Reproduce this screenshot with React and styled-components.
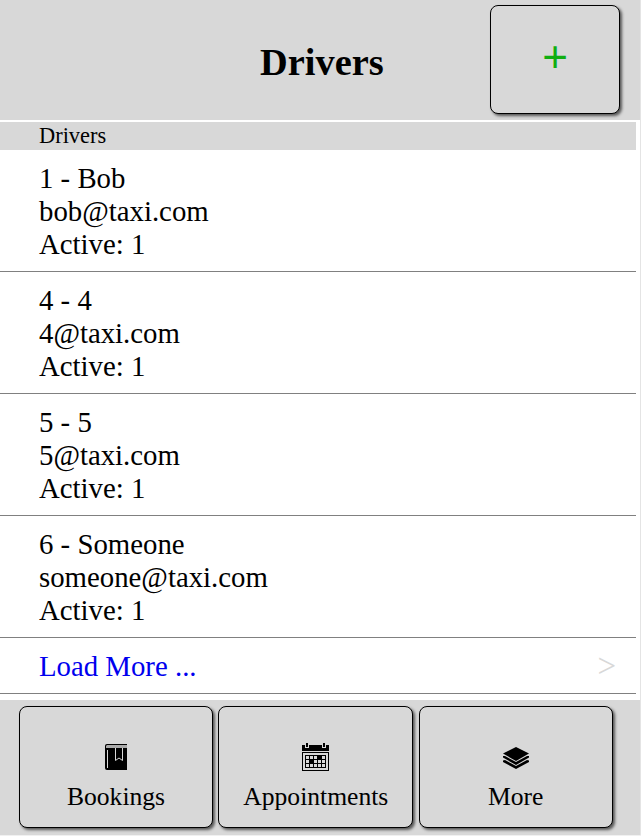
import React from "react";
import styled, { createGlobalStyle } from "styled-components";

const GlobalStyle = createGlobalStyle`
  * { box-sizing: border-box; }
  body {
    margin: 0;
    background: #f0f0f0;
    color: #000;
    font-family: "Liberation Serif", "Times New Roman", serif;
    overflow: hidden;
  }
`;

const Page = styled.div`
  display: flex;
  flex-direction: column;
  width: 641px;
  height: 835px;
  background: #fff;
  border-right: 1px solid #e4e4e4;
`;

const Header = styled.header`
  display: grid;
  grid-template-columns: 490px 130px;
  height: 120px;
  padding-top: 5px;
  background: #d8d8d8;
`;

const Title = styled.h1`
  margin: 0;
  padding: 36px 0 0 260px;
  font-size: 38.4px;
  line-height: 43px;
`;

const Button = styled.button`
  display: flex;
  flex-direction: column;
  align-items: center;
  padding: 0;
  border: 1px solid #000;
  border-radius: 8px;
  background: #d8d8d8;
  box-shadow: 2px 2px 3px rgba(0, 0, 0, 0.6);
  color: #000;
  font: 25.6px/29px "Liberation Serif", "Times New Roman", serif;
`;

const AddButton = styled(Button)`
  width: 130px;
  height: 109px;
  color: #11ae11;
  font-family: "Liberation Sans", Arial, sans-serif;
  font-size: 44px;
  line-height: 48px;
  padding-top: 27px;
`;

const List = styled.main`
  width: 636px;
  height: 578px;
  margin: 2px 0 0;
`;

const SectionHeading = styled.h2`
  margin: 0;
  height: 28px;
  padding: 1px 0 0 39px;
  background: #d8d8d8;
  font-size: 22.4px;
  line-height: 26px;
  font-weight: normal;
`;

const Row = styled.div`
  padding: 12px 20px 10px 39px;
  border-bottom: 1px solid #808080;
  font-size: 28.8px;
  line-height: 33px;
`;

const LoadRow = styled(Row)`
  display: flex;
  justify-content: space-between;
  color: #0000ee;
`;

const Chevron = styled.span`
  color: #d8d8d8;
  font-size: 33px;
`;

const Footer = styled.footer`
  display: grid;
  grid-template-columns: 194px 195px 194px;
  column-gap: 5.3px;
  height: 135px;
  padding: 6px 0 7px 19px;
  background: #d8d8d8;
`;

const NavButton = styled(Button)`
  padding-top: 35px;
  height: 122px;
`;

const Icon = styled.svg`
  display: block;
  width: 32px;
  height: 32px;
  margin-bottom: 8px;
`;

const BookIcon = () => (
  <Icon viewBox="0 0 32 32">
    <path d="M7 2H27V28H7Q5 28 5 26V4Q5 2 7 2Z" />
    <path d="M7 3H27V6H6V4Z" fill="#aaa" />
    <path d="M7.5 8V26" stroke="#d8d8d8" />
    <path d="M15.5 6V18.5L19 16L22.5 18.5V6" fill="none" stroke="#d8d8d8" />
  </Icon>
);

const CalendarIcon = () => (
  <Icon viewBox="0 0 32 32" shapeRendering="crispEdges">
    <path d="M2 3H5V6H9V3H22V6H26V3H29V9H2ZM6 1H8V5H6ZM23 1H25V5H23Z" />
    <path d="M2.5 10.5H28.5V28.5H2.5Z" fill="none" stroke="#000" />
    <path
      d="M5.5 13.5H25.5V25.5H5.5ZM5 17.5H26M5 21.5H26M9.5 13V26M13.5 13V26M17.5 13V26M21.5 13V26"
      fill="none"
      stroke="#000"
    />
    <path d="M17 13H21V17H17ZM9 17H13V21H9Z" />
  </Icon>
);

const LayersIcon = () => (
  <Icon viewBox="0 0 32 32">
    <path d="M16 5L29 11.5L16 19L3 11.5Z" />
    <path d="M3 14L5 14L16 20L27 14L29 14V15.5L16 23L3 15.5Z" />
    <path d="M3 18.5L5 18L16 24L27 18L29 18.5V20L16 27L3 20Z" />
  </Icon>
);

const drivers = [
  { id: 1, name: "Bob", email: "bob@taxi.com" },
  { id: 4, name: "4", email: "4@taxi.com" },
  { id: 5, name: "5", email: "5@taxi.com" },
  { id: 6, name: "Someone", email: "someone@taxi.com" },
];

const links = [
  { label: "Bookings", Glyph: BookIcon },
  { label: "Appointments", Glyph: CalendarIcon },
  { label: "More", Glyph: LayersIcon },
];

export default function App() {
  return (
    <>
      <GlobalStyle />
      <Page>
        <Header>
          <Title>Drivers</Title>
          <AddButton>+</AddButton>
        </Header>
        <List>
          <SectionHeading>Drivers</SectionHeading>
          {drivers.map((d) => (
            <Row key={d.id}>
              <div>{`${d.id} - ${d.name}`}</div>
              <div>{d.email}</div>
              <div>Active: 1</div>
            </Row>
          ))}
          <LoadRow>
            <span>Load More ...</span>
            <Chevron>&gt;</Chevron>
          </LoadRow>
        </List>
        <Footer>
          {links.map(({ label, Glyph }) => (
            <NavButton key={label}>
              <Glyph />
              {label}
            </NavButton>
          ))}
        </Footer>
      </Page>
    </>
  );
}
